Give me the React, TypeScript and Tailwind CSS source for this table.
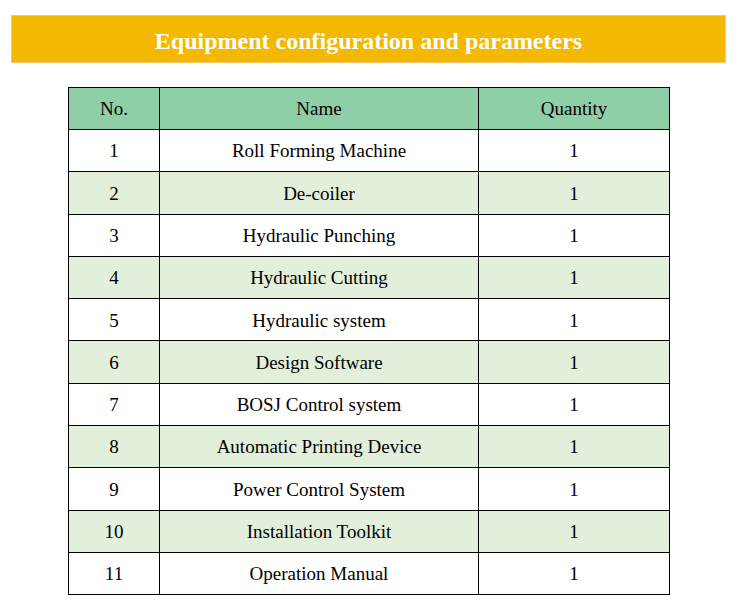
const rows: [number, string, number][] = [
  [1, "Roll Forming Machine", 1],
  [2, "De-coiler", 1],
  [3, "Hydraulic Punching", 1],
  [4, "Hydraulic Cutting", 1],
  [5, "Hydraulic system", 1],
  [6, "Design Software", 1],
  [7, "BOSJ Control system", 1],
  [8, "Automatic Printing Device", 1],
  [9, "Power Control System", 1],
  [10, "Installation Toolkit", 1],
  [11, "Operation Manual", 1],
];

export default function App() {
  return (
    <div className="w-[737px] h-[614px] bg-white pt-[15px] font-['Liberation_Serif',serif] text-black">
      {/* Banner */}
      <div className="mx-[11px] h-[48px] bg-[#f4b800] border border-[#f7c873] flex items-center justify-center pt-[4px]">
        <h1 className="text-white font-bold text-[24px] leading-none">
          Equipment configuration and parameters
        </h1>
      </div>

      {/* Table */}
      <table className="ml-[68px] mt-[24px] w-[602px] border-collapse text-[19px] text-center">
        <thead>
          <tr className="h-[42px] bg-[#8fcfa7]">
            <th className="w-[91px] border border-black font-normal pt-[2px]">No.</th>
            <th className="w-[319px] border border-black font-normal pt-[2px]">Name</th>
            <th className="border border-black font-normal pt-[2px]">Quantity</th>
          </tr>
        </thead>
        <tbody>
          {rows.map(([no, name, qty]) => (
            <tr
              key={no}
              className={no % 2 === 0 ? "h-[42.3px] bg-[#e2efda]" : "h-[42.3px] bg-white"}
            >
              <td className="border border-black pt-[2px]">{no}</td>
              <td className="border border-black pt-[2px]">{name}</td>
              <td className="border border-black pt-[2px]">{qty}</td>
            </tr>
          ))}
        </tbody>
      </table>
    </div>
  );
}
